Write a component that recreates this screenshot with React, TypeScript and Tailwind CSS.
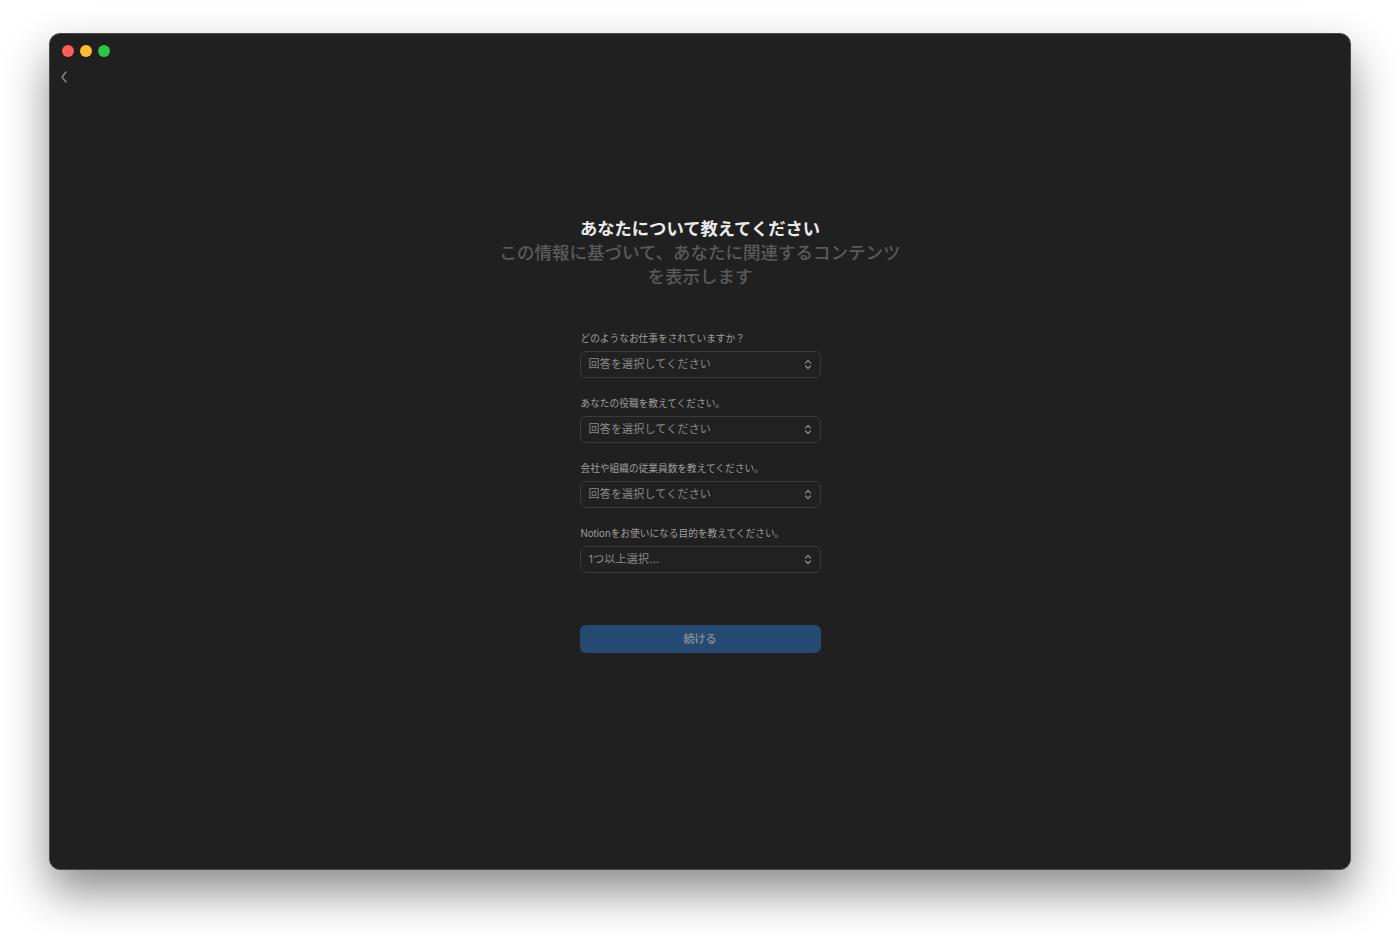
import React from "react";

const fields = [
  { label: "どのようなお仕事をされていますか？", placeholder: "回答を選択してください" },
  { label: "あなたの役職を教えてください。", placeholder: "回答を選択してください" },
  { label: "会社や組織の従業員数を教えてください。", placeholder: "回答を選択してください" },
  { label: "Notionをお使いになる目的を教えてください。", placeholder: "1つ以上選択..." },
];

const Chevrons = () => (
  <svg width="8" height="11" viewBox="0 0 8 11" fill="none" stroke="#8a8a8a" strokeWidth="1.2" strokeLinecap="round" strokeLinejoin="round">
    <path d="M1.5 4 L4 1.5 L6.5 4" />
    <path d="M1.5 7 L4 9.5 L6.5 7" />
  </svg>
);

export default function App() {
  return (
    <div
      className="w-[1400px] h-[936px] bg-white pt-[33px] px-[49px]"
      style={{ fontFamily: '"Inter", "Noto Sans CJK JP", sans-serif' }}
    >
      <div className="relative h-[837px] rounded-[11px] bg-[#202020] border border-[#4a4a4a] shadow-[0_22px_45px_rgba(0,0,0,0.45)]">
        <div className="flex items-center gap-[6px] pl-[12px] pt-[11px]">
          <span className="w-[12px] h-[12px] rounded-full bg-[#fe5f57]" />
          <span className="w-[12px] h-[12px] rounded-full bg-[#febc2e]" />
          <span className="w-[12px] h-[12px] rounded-full bg-[#28c840]" />
        </div>
        <div className="pl-[10px] pt-[14px]">
          <svg width="8" height="12" viewBox="0 0 8 12" fill="none" stroke="#8c8c8c" strokeWidth="1.3" strokeLinecap="round" strokeLinejoin="round">
            <path d="M6 1 L2 6 L6 11" />
          </svg>
        </div>

        <div className="flex flex-col items-center pt-[134px]">
          <h1 className="text-[17.3px] leading-[24px] font-bold text-[#ebebeb]">あなたについて教えてください</h1>
          <p className="w-[440px] text-center text-[17.5px] leading-[24px] font-medium text-[#5a5a5a]">
            この情報に基づいて、あなたに関連するコンテンツ
            <br />
            を表示します
          </p>

          <div className="w-[241px] mt-[43px] flex flex-col gap-[19px]">
            {fields.map((f) => (
              <div key={f.label} className="flex flex-col gap-[5px]">
                <label className="text-[9.7px] leading-[14px] text-[#9e9e9e] pl-[1px]">{f.label}</label>
                <div className="h-[27px] flex items-center justify-between pl-[8px] pr-[8px] rounded-[6px] border border-[#3a3a3a] bg-[#212121]">
                  <span className="text-[11px] text-[#8a8a8a] tracking-[0.2px]">{f.placeholder}</span>
                  <Chevrons />
                </div>
              </div>
            ))}
          </div>

          <button className="mt-[52px] w-[241px] h-[28px] rounded-[6px] bg-[#254970] text-[11px] font-semibold text-[#7d8794]">
            続ける
          </button>
        </div>
      </div>
    </div>
  );
}
